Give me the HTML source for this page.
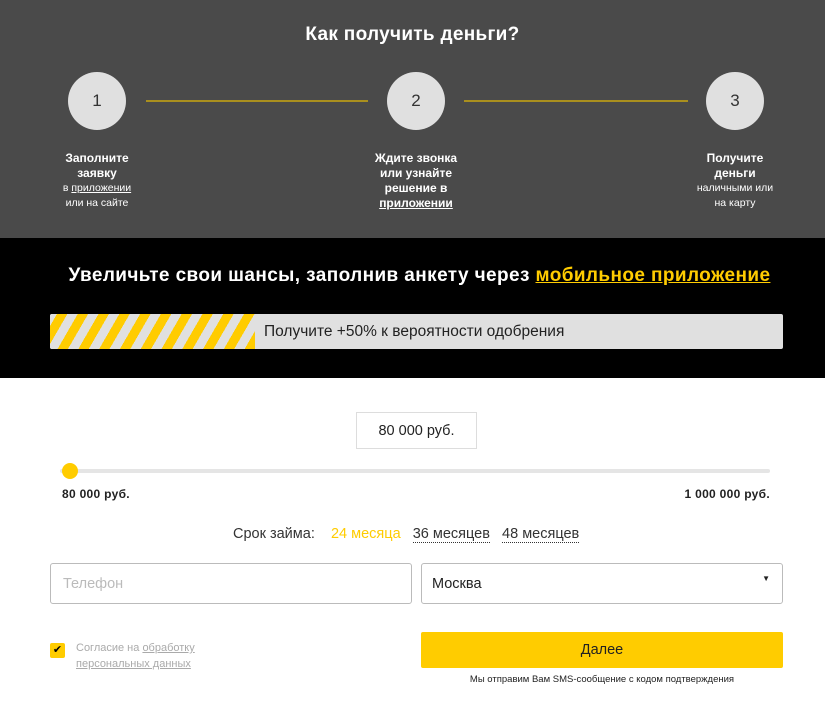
<!DOCTYPE html>
<html><head><meta charset="utf-8"><style>
*{box-sizing:border-box;margin:0;padding:0}
body{width:825px;height:714px;overflow:hidden;font-family:"Liberation Sans","DejaVu Sans",sans-serif;background:#fff;position:relative}
.a{position:absolute}
.top{left:0;top:0;width:825px;height:238px;background:#4a4a4a}
.blk{left:0;top:238px;width:825px;height:140px;background:#000}
.c{width:58px;height:58px;border-radius:50%;background:#e0e0e0;color:#333;font-size:17px;text-align:center;line-height:58px;top:72px}
.ln{height:2px;background:#a98f1e;top:100px}
.st{top:151px;width:120px;text-align:center;color:#fff;font-size:12px;line-height:15px}
.st b{display:block;font-size:12px;line-height:15px}
.st u{text-decoration:underline}
.sm{font-size:10.5px;line-height:15px}
</style></head><body>
<div class="a top"></div>
<div class="a" style="top:24px;left:0;width:825px;text-align:center;color:#fff;font-weight:bold;font-size:19px;letter-spacing:0.3px">Как получить деньги?</div>
<div class="a c" style="left:68px">1</div>
<div class="a c" style="left:387px">2</div>
<div class="a c" style="left:706px">3</div>
<div class="a ln" style="left:146px;width:222px"></div>
<div class="a ln" style="left:464px;width:224px"></div>
<div class="a st" style="left:37px"><b>Заполните<br>заявку</b><div class="sm">в <u>приложении</u><br>или на сайте</div></div>
<div class="a st" style="left:356px"><b>Ждите звонка<br>или узнайте<br>решение в<br><u>приложении</u></b></div>
<div class="a st" style="left:675px"><b>Получите<br>деньги</b><div class="sm">наличными или<br>на карту</div></div>
<div class="a blk"></div>
<div class="a" style="top:265px;left:7px;width:825px;text-align:center;color:#fff;font-weight:bold;font-size:19px;letter-spacing:0.4px">Увеличьте свои шансы, заполнив анкету через <span style="color:#fc0;text-decoration:underline">мобильное приложение</span></div>
<div class="a" style="left:50px;top:314px;width:733px;height:35px;background:#e0e0e0;border-radius:2px;overflow:hidden">
<div style="width:205px;height:35px;background:repeating-linear-gradient(-60deg,#fc0 0 9px,#e0e0e0 9px 18px)"></div>
<div class="a" style="left:214px;top:9px;font-size:15.5px;color:#222">Получите +50% к вероятности одобрения</div></div>
<div class="a" style="left:356px;top:412px;width:121px;height:37px;border:1px solid #ddd;text-align:center;line-height:37px;font-size:14.5px;color:#222">80 000 руб.</div>
<div class="a" style="left:60px;top:469px;width:710px;height:4px;background:#e5e5e5;border-radius:2px"></div>
<div class="a" style="left:62px;top:463px;width:16px;height:16px;border-radius:50%;background:#fc0"></div>
<div class="a" style="left:62px;top:487px;font-size:12px;font-weight:bold;color:#222;letter-spacing:0.3px">80 000 руб.</div>
<div class="a" style="right:55px;top:487px;font-size:12px;font-weight:bold;color:#222;letter-spacing:0.3px">1 000 000 руб.</div>
<div class="a" style="left:233px;top:526px;font-size:14.5px;color:#333">Срок займа:&nbsp;&nbsp;&nbsp;&nbsp;<span style="color:#fc0">24 месяца</span>&nbsp;&nbsp;&nbsp;<span style="border-bottom:1px dotted #333">36 месяцев</span>&nbsp;&nbsp;&nbsp;<span style="border-bottom:1px dotted #333">48 месяцев</span></div>
<div class="a" style="left:50px;top:563px;width:362px;height:41px;border:1px solid #bbb;border-radius:3px;padding:12px 12px;font-size:14.5px;color:#bbb">Телефон</div>
<div class="a" style="left:421px;top:563px;width:362px;height:41px;border:1px solid #bbb;border-radius:3px;padding:12px 10px;font-size:14.5px;color:#222">Москва<span style="position:absolute;right:12px;top:10px;font-size:8px">▼</span></div>
<div class="a" style="left:50px;top:643px;width:15px;height:15px;background:#fc0;border-radius:2px;font-size:11px;text-align:center;line-height:15px;color:#000">✔</div>
<div class="a" style="left:76px;top:640px;font-size:11px;line-height:16px;color:#aaa">Согласие на <u>обработку</u><br><u>персональных данных</u></div>
<div class="a" style="left:421px;top:632px;width:362px;height:36px;background:#fc0;border-radius:2px;text-align:center;line-height:36px;font-size:14.5px;color:#222">Далее</div>
<div class="a" style="left:421px;top:674px;width:362px;text-align:center;font-size:9.5px;color:#222">Мы отправим Вам SMS-сообщение с кодом подтверждения</div>
</body></html>
